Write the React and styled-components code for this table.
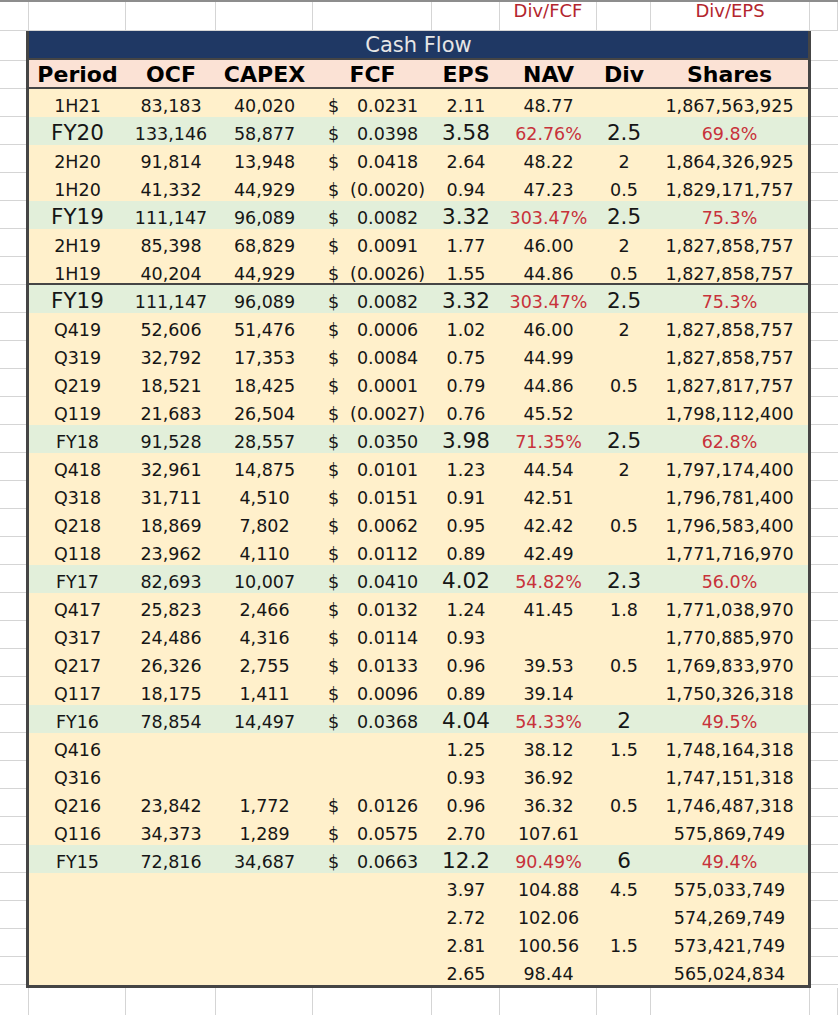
import React from 'react';
import styled, { createGlobalStyle } from 'styled-components';

const GRID = '#d5d5d5';
const BORDER = '#454545';
const SHEET_COLS = '29px 97px 90px 97px 119px 68px 97px 54px 159px 28px';
const TABLE_COLS = '97px 90px 97px 119px 68px 97px 54px 157px';

// [period, ocf, capex, fcf, eps, nav, div, shares, flags]
const rows = [
  ['1H21', '83,183', '40,020', '0.0231', '2.11', '48.77', '', '1,867,563,925'],
  ['FY20', '133,146', '58,877', '0.0398', '3.58', '62.76%', '2.5', '69.8%', 'fy big'],
  ['2H20', '91,814', '13,948', '0.0418', '2.64', '48.22', '2', '1,864,326,925'],
  ['1H20', '41,332', '44,929', '-0.0020', '0.94', '47.23', '0.5', '1,829,171,757'],
  ['FY19', '111,147', '96,089', '0.0082', '3.32', '303.47%', '2.5', '75.3%', 'fy big'],
  ['2H19', '85,398', '68,829', '0.0091', '1.77', '46.00', '2', '1,827,858,757'],
  ['1H19', '40,204', '44,929', '-0.0026', '1.55', '44.86', '0.5', '1,827,858,757', 'divider'],
  ['FY19', '111,147', '96,089', '0.0082', '3.32', '303.47%', '2.5', '75.3%', 'fy big'],
  ['Q419', '52,606', '51,476', '0.0006', '1.02', '46.00', '2', '1,827,858,757'],
  ['Q319', '32,792', '17,353', '0.0084', '0.75', '44.99', '', '1,827,858,757'],
  ['Q219', '18,521', '18,425', '0.0001', '0.79', '44.86', '0.5', '1,827,817,757'],
  ['Q119', '21,683', '26,504', '-0.0027', '0.76', '45.52', '', '1,798,112,400'],
  ['FY18', '91,528', '28,557', '0.0350', '3.98', '71.35%', '2.5', '62.8%', 'fy'],
  ['Q418', '32,961', '14,875', '0.0101', '1.23', '44.54', '2', '1,797,174,400'],
  ['Q318', '31,711', '4,510', '0.0151', '0.91', '42.51', '', '1,796,781,400'],
  ['Q218', '18,869', '7,802', '0.0062', '0.95', '42.42', '0.5', '1,796,583,400'],
  ['Q118', '23,962', '4,110', '0.0112', '0.89', '42.49', '', '1,771,716,970'],
  ['FY17', '82,693', '10,007', '0.0410', '4.02', '54.82%', '2.3', '56.0%', 'fy'],
  ['Q417', '25,823', '2,466', '0.0132', '1.24', '41.45', '1.8', '1,771,038,970'],
  ['Q317', '24,486', '4,316', '0.0114', '0.93', '', '', '1,770,885,970'],
  ['Q217', '26,326', '2,755', '0.0133', '0.96', '39.53', '0.5', '1,769,833,970'],
  ['Q117', '18,175', '1,411', '0.0096', '0.89', '39.14', '', '1,750,326,318'],
  ['FY16', '78,854', '14,497', '0.0368', '4.04', '54.33%', '2', '49.5%', 'fy'],
  ['Q416', '', '', '', '1.25', '38.12', '1.5', '1,748,164,318'],
  ['Q316', '', '', '', '0.93', '36.92', '', '1,747,151,318'],
  ['Q216', '23,842', '1,772', '0.0126', '0.96', '36.32', '0.5', '1,746,487,318'],
  ['Q116', '34,373', '1,289', '0.0575', '2.70', '107.61', '', '575,869,749'],
  ['FY15', '72,816', '34,687', '0.0663', '12.2', '90.49%', '6', '49.4%', 'fy'],
  ['', '', '', '', '3.97', '104.88', '4.5', '575,033,749'],
  ['', '', '', '', '2.72', '102.06', '', '574,269,749'],
  ['', '', '', '', '2.81', '100.56', '1.5', '573,421,749'],
  ['', '', '', '', '2.65', '98.44', '', '565,024,834'],
];

const headers = ['Period', 'OCF', 'CAPEX', 'FCF', 'EPS', 'NAV', 'Div', 'Shares'];

const GlobalStyle = createGlobalStyle`
  html, body { margin: 0; padding: 0; background: #ffffff; }
  body { font-family: "DejaVu Sans", Verdana, sans-serif; }
  * { box-sizing: border-box; }
`;

const Sheet = styled.div`
  width: 838px;
  height: 1015px;
  overflow: hidden;
  border-top: 2px solid #8d8d8d;
  display: flex;
  flex-direction: column;
  background: #fff;
`;

const GridRow = styled.div`
  display: grid;
  grid-template-columns: ${SHEET_COLS};
  height: ${(p) => p.$h}px;
  flex: none;
  border-bottom: ${(p) => (p.$lined ? `1px solid ${GRID}` : 'none')};
`;

const GridCell = styled.div`
  border-right: 1px solid ${GRID};
  text-align: center;
  color: #b3262e;
  font-size: 18px;
  line-height: 16px;
  padding-top: 1px;
  white-space: nowrap;
`;

const Middle = styled.div`
  display: flex;
  flex: none;
`;

const Gutter = styled.div`
  display: flex;
  flex-direction: column;
  width: ${(p) => p.$w}px;
  flex: none;
`;

const GutterCell = styled.div`
  height: ${(p) => p.$h}px;
  flex: none;
  border-bottom: 1px solid ${GRID};
`;

const Table = styled.div`
  width: 785px;
  flex: none;
  border: 3px solid ${BORDER};
  border-top: none;
  background: #fff0cb;
`;

const Title = styled.div`
  height: 29px;
  background: #1f3864;
  border-bottom: 2px solid ${BORDER};
  color: #e6e6e6;
  text-align: center;
  font-size: 21px;
  line-height: 21px;
  padding-top: 4px;
`;

const HeaderRow = styled.div`
  display: grid;
  grid-template-columns: ${TABLE_COLS};
  height: 29px;
  background: #fbe2d5;
  border-bottom: 2px solid ${BORDER};
`;

const HeaderCell = styled.div`
  text-align: center;
  font-weight: bold;
  font-size: 22px;
  line-height: 24px;
  padding-top: 3px;
  color: #000;
  white-space: nowrap;
`;

const Row = styled.div`
  display: grid;
  grid-template-columns: ${TABLE_COLS};
  height: 28px;
  background: ${(p) => (p.$fy ? '#e2efda' : '#fff0cb')};
  border-bottom: ${(p) => (p.$divider ? `2px solid ${BORDER}` : 'none')};
`;

const Cell = styled.div`
  text-align: center;
  font-size: ${(p) => (p.$big ? 21.5 : 17.5)}px;
  line-height: 22px;
  padding-top: ${(p) => (p.$big ? 5 : 6)}px;
  white-space: nowrap;
  color: ${(p) => (p.$red ? '#c8323a' : '#161616')};
`;

const MoneyCell = styled.div`
  display: flex;
  justify-content: space-between;
  padding: 6px 7px 0 15px;
  font-size: 17.5px;
  line-height: 22px;
  color: #161616;
  white-space: nowrap;
`;

const Paren = styled.span`
  visibility: ${(p) => (p.$show ? 'visible' : 'hidden')};
`;

function Money({ value }) {
  if (!value) return <MoneyCell />;
  const neg = value.startsWith('-');
  const num = neg ? value.slice(1) : value;
  return (
    <MoneyCell>
      <span>$</span>
      <span>
        {neg ? '(' : ''}
        {num}
        <Paren $show={neg}>)</Paren>
      </span>
    </MoneyCell>
  );
}

const isPct = (v) => v.endsWith('%');

export default function App() {
  const gutterHeights = [30, 28, ...rows.map(() => 28)];
  return (
    <>
      <GlobalStyle />
      <Sheet>
        <GridRow $h={29} $lined>
          <GridCell />
          <GridCell />
          <GridCell />
          <GridCell />
          <GridCell />
          <GridCell />
          <GridCell>Div/FCF</GridCell>
          <GridCell />
          <GridCell>Div/EPS</GridCell>
          <GridCell />
        </GridRow>
        <Middle>
          <Gutter $w={26}>
            {gutterHeights.map((h, i) => (
              <GutterCell key={i} $h={h} />
            ))}
          </Gutter>
          <Table>
            <Title>Cash Flow</Title>
            <HeaderRow>
              {headers.map((h) => (
                <HeaderCell key={h}>{h}</HeaderCell>
              ))}
            </HeaderRow>
            {rows.map((r, i) => {
              const [period, ocf, capex, fcf, eps, nav, div, shares, flags = ''] = r;
              const fy = flags.includes('fy');
              const bigPeriod = flags.includes('big');
              return (
                <Row key={i} $fy={fy} $divider={flags.includes('divider')}>
                  <Cell $big={bigPeriod}>{period}</Cell>
                  <Cell>{ocf}</Cell>
                  <Cell>{capex}</Cell>
                  <Money value={fcf} />
                  <Cell $big={fy}>{eps}</Cell>
                  <Cell $red={isPct(nav)}>{nav}</Cell>
                  <Cell $big={fy}>{div}</Cell>
                  <Cell $red={isPct(shares)}>{shares}</Cell>
                </Row>
              );
            })}
          </Table>
          <Gutter $w={27}>
            {gutterHeights.map((h, i) => (
              <GutterCell key={i} $h={h} />
            ))}
          </Gutter>
        </Middle>
        <GridRow $h={27}>
          {Array.from({ length: 10 }).map((_, i) => (
            <GridCell key={i} />
          ))}
        </GridRow>
      </Sheet>
    </>
  );
}
